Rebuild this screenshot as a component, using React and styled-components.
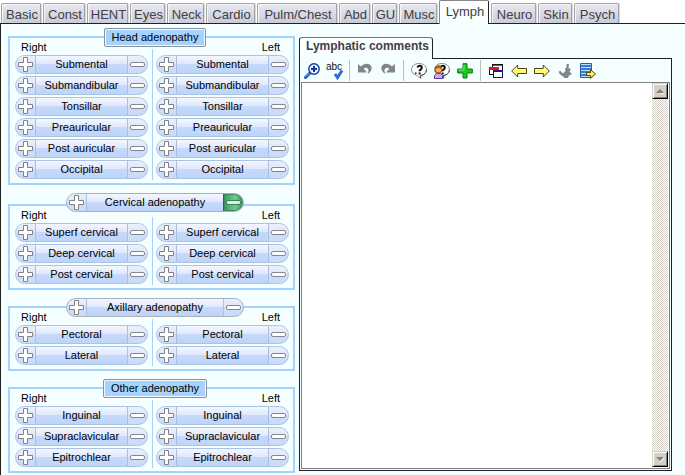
import React from "react";
import styled, { createGlobalStyle, css } from "styled-components";

const GlobalStyle = createGlobalStyle`
  * { box-sizing: border-box; }
  body { margin: 0; background: #f5ffff; }
  button, textarea { font-family: inherit; }
`;

const Page = styled.div`
  display: flex;
  flex-direction: column;
  min-height: 100vh;
  background: #f5ffff;
  color: #000;
  font: 11px/13px "Liberation Sans", Arial, sans-serif;
`;

const TabBar = styled.nav`
  display: flex;
  align-items: flex-end;
  gap: 2px;
  height: 24px;
  padding-left: 1px;
  background: #fff;
  box-shadow: inset 0 -1px #222;
`;

const Tab = styled.button`
  flex: 0 0 ${(p) => p.$width}px;
  height: 20px;
  margin: 0 0 1px;
  padding: 3px 0 0 2px;
  border: 1px solid #a2a2a6;
  border-bottom: 0;
  border-radius: 2px 2px 0 0;
  background: linear-gradient(#e8e9f0, #c9cbda);
  box-shadow: inset 1px 1px #f6f6fa, 1px 0 #d8d8dc;
  color: #404040;
  font-size: 13px;
  line-height: 15px;
  white-space: nowrap;
  display: flex;
  justify-content: center;
  ${(p) =>
    p.$active &&
    css`
      height: 24px;
      margin: 0;
      border-color: #888;
      border-right-color: #222;
      background: linear-gradient(#fff, #f5ffff);
      box-shadow: none;
    `}
`;

const Content = styled.main`
  flex: 1;
  display: flex;
  align-items: flex-start;
  gap: 4px;
  padding: 12px 13px 2px 7px;
  border-left: 1px solid #222;
`;

const Findings = styled.div`
  flex: 0 0 287px;
  display: flex;
  flex-direction: column;
  gap: 16px;
`;

const Panel = styled.section`
  position: relative;
  border: 2px solid #a5d3ff;
  padding: 17px 4px 2px 5px;
  margin-bottom: ${(p) => (p.$spaced ? 3 : 0)}px;
`;

const PanelHead = styled.div`
  position: absolute;
  top: -${(p) => p.$rise}px;
  left: 56px;
  width: 178px;
  display: grid;
  justify-items: ${(p) => (p.$wide ? "stretch" : "center")};
`;

const PanelTitle = styled.h2`
  margin: 0;
  padding: 2px 7px;
  border: 1px solid #8e9296;
  border-radius: 2px;
  box-shadow: inset 0 0 0 1px #f2f8ff;
  background: #a5d3ff;
  font-size: 11px;
  font-weight: 400;
  line-height: 13px;
  white-space: nowrap;
`;

const Side = styled.span`
  position: absolute;
  top: 3px;
  ${(p) => (p.$right ? "right: 13px;" : "left: 11px;")}
`;

const Columns = styled.div`
  display: grid;
  grid-template-columns: 1fr 8px 1fr;
`;

const Column = styled.div`
  display: grid;
  row-gap: 2px;
  padding-bottom: 2px;
`;

const Divider = styled.span`
  width: 1px;
  background: #a5d3ff;
  margin: -6px 0 1px 4px;
`;

const Pill = styled.div`
  display: flex;
  height: 19px;
  border: 1px solid ${(p) => (p.$heading ? "#a9b0ba" : "#abc4e4")};
  border-radius: 10px;
  overflow: hidden;
  background: linear-gradient(#f4f7ff 0%, #e0e8fc 45%, #c7d9fa 50%, #bdd4fa 100%);
`;

const PillLabel = styled.span`
  flex: 1;
  text-align: center;
  line-height: 17px;
  white-space: nowrap;
`;

const SignButton = styled.button`
  flex: 0 0 20px;
  display: flex;
  align-items: center;
  justify-content: center;
  padding: 0;
  border: 0 solid #a9bfe0;
  border-${(p) => (p.$end ? "left" : "right")}-width: 1px;
  background: ${(p) =>
    p.$on ? "linear-gradient(90deg, #379c62, #72c990 60%, #388f5c)" : "rgba(220, 230, 248, 0.4)"};
  ${(p) => p.$on && "border-color: #246c42; border-radius: 0 9px 9px 0; box-shadow: inset 0 0 0 1px #42855b;"}
`;

const Comments = styled.section`
  flex: 1;
  align-self: stretch;
  display: flex;
  flex-direction: column;
  min-width: 0;
  padding-top: 1px;
  margin-bottom: 2px;
`;

const CommentsTab = styled.label`
  align-self: flex-start;
  position: relative;
  z-index: 1;
  height: 22px;
  margin-bottom: -1px;
  padding: 2px 3px 0 6px;
  border: 1px solid #777;
  border-right-color: #222;
  border-left-color: #222;
  border-bottom: 0;
  border-radius: 3px 3px 0 0;
  background: linear-gradient(#fff, #f5ffff);
  color: #404048;
  font-size: 12px;
  font-weight: 700;
  line-height: 13px;
`;

const CommentsBody = styled.div`
  flex: 1;
  display: flex;
  flex-direction: column;
  border: 1px solid #222;
`;

const Toolbar = styled.div`
  display: flex;
  height: 23px;
  padding: 1px 0;
`;

const ToolGroup = styled.div`
  display: flex;
  align-items: center;
  gap: 7px;
  padding: 0 7px;
  & + & { border-left: 1px solid #bfbfbf; }
  &:first-child { padding: 0 6px 0 4px; }
`;

const ToolButton = styled.button`
  display: flex;
  width: 16px;
  height: 16px;
  padding: 0;
  border: 0;
  background: none;
`;

const Editor = styled.div`
  flex: 1;
  display: flex;
  margin: 0 1px 1px;
  padding: 0 1px 1px 0;
  border: 1px solid #808080;
  background: #fff;
`;

const EditorText = styled.textarea`
  flex: 1;
  min-width: 0;
  resize: none;
  border: 0;
  outline: 0;
  padding: 4px;
  background: #fff;
  font-size: 12px;
`;

const ScrollTrack = styled.div`
  flex: 0 0 16px;
  display: flex;
  flex-direction: column;
  justify-content: space-between;
  background: repeating-conic-gradient(#d4d0c8 0% 25%, #fff 0% 50%) 0 0 / 2px 2px;
`;

const ScrollButton = styled.button`
  display: flex;
  width: 16px;
  height: 16px;
  padding: 3px 2px;
  border: 1px solid #d4d0c8;
  border-right-color: #000;
  border-bottom-color: #000;
  background: #d4d0c8;
  box-shadow: inset 1px 1px #fff, inset -1px -1px #808080;
`;

const Svg = ({ children, ...rest }) => (
  <svg width="16" height="16" viewBox="0 0 16 16" fill="none" overflow="visible" aria-hidden="true" {...rest}>
    {children}
  </svg>
);

const PlusSign = () => (
  <Svg width="15" height="15" viewBox="0 0 15 15">
    <path d="M5.500.5h4v5h5v4h-5v5h-4v-5h-5v-4h5z" fill="#fff" stroke="#808288" strokeLinejoin="round" />
  </Svg>
);

const MinusSign = ({ on }) => (
  <Svg width="15" height="15" viewBox="0 0 15 15">
    <rect x=".5" y="5.5" width="14" height="4" rx="1.5" fill={on ? "#d7f4dd" : "#fff"} stroke={on ? "#348656" : "#85878c"} />
  </Svg>
);

const Bubble = () => (
  <>
    <path d="M8 .5C3.7.5.6 3 .6 6.600c0 3 2.100 5.200 5.200 5.800l3.600 2.900v-2.800c3.600-.4 6-2.700 6-5.900C15.400 3 12.300.5 8 .5z" fill="#fff" stroke="#888" />
    <path d="M15.300 6.500c.2 3-2 5.400-5.600 5.900v2.900" stroke="#444" />
    <path d="M6.500 4.500c.2-1.200 1-1.700 2.100-1.700 1.300 0 2.200.7 2.200 1.900 0 1.700-2.200 1.700-2.200 3.600" stroke="#111" strokeWidth="2" />
    <path d="M7.600 9.500h2v2h-2zM4 9.500h1.500V11H4z" fill="#111" />
  </>
);

const UndoShape = () => (
  <path d="M1 1l3 2.500C7 .3 11 0 13.300 2c2.500 2.600 1.500 6.500-2.800 9 1.200-2.500 1.500-4.500 0-5.800-1.200-.9-2.700-.6-3.800.6L10 9.500H1z" fill="#858585" />
);

const icons = {
  zoom: (
    <Svg>
      <path d="M1.500 14.500L6 10" stroke="#1c50c8" strokeWidth="3" strokeLinecap="round" />
      <path d="M1.500 14l4-4" stroke="#77b4ff" />
      <circle cx="10" cy="6" r="5.200" fill="#e4f4ff" stroke="#1438a0" strokeWidth="1.400" />
      <path d="M10 3v6M7 6h6" stroke="#1438a0" strokeWidth="2" />
    </Svg>
  ),
  spell: (
    <Svg>
      <text x="-1" y="7" fontSize="10" fill="#111" fontFamily="Liberation Sans, Arial, sans-serif">abc</text>
      <path d="M8 11l2.500 3.500L15 7.500" stroke="#2a6ddd" strokeWidth="3" />
    </Svg>
  ),
  undo: <Svg><UndoShape /></Svg>,
  redo: <Svg><g transform="matrix(-1 0 0 1 16 0)"><UndoShape /></g></Svg>,
  help: <Svg><Bubble /></Svg>,
  person: (
    <Svg>
      <Bubble />
      <path d="M.5 15.500v-3L2.500 10.500h4l2 2v3z" fill="#c9a8f8" stroke="#5c3b9a" />
      <circle cx="4.500" cy="6.500" r="3.500" fill="#f8b848" stroke="#8f4a10" />
      <path d="M1 6c0-5 7-5 7 0-1.500 0-2.500-.5-3.500-1.200C3.500 5.700 2.300 6 1 6z" fill="#a85a18" />
    </Svg>
  ),
  plus: (
    <Svg>
      <path d="M6 .7h4V6h5.300v4H10v5H6v-5H.7V6H6z" fill="#12cf12" stroke="#16701f" strokeLinejoin="round" />
      <path d="M7 2v5H2" stroke="#7cf07c" />
    </Svg>
  ),
  windows: (
    <Svg shapeRendering="crispEdges">
      <path d="M4.500 1.500h10v8h-10z" fill="#fff" stroke="#111" />
      <path d="M5 2h9v1H5z" fill="#12888c" />
      <path d="M1.500 4.500h9v7h-9z" fill="#fff" stroke="#111" />
      <path d="M1 4h10v3H1z" fill="#e31616" />
      <path d="M5.500 7.500h9v7h-9z" fill="#fff" stroke="#151560" />
      <path d="M5 7h10v2H5z" fill="#151597" />
    </Svg>
  ),
  back: (
    <Svg>
      <path d="M.7 8l6-6v3.500h8.800v5H6.700V14z" fill="#fff777" stroke="#51410a" />
      <path d="M2.500 7.500l3.200-3v2h9" stroke="#fffde0" />
    </Svg>
  ),
  forward: (
    <Svg>
      <path d="M15.300 8l-6-6v3.500H.5v5h8.800V14z" fill="#fff777" stroke="#51410a" />
      <path d="M1.500 6.500h8.800v-2" stroke="#fffde0" />
    </Svg>
  ),
  check: (
    <Svg>
      <path d="M9.500 1h2.500l-.5 4 2.500 1-1.500 2.500L15 11l-3 1.500-1 2.500H7.500L5 12.500 3 11.500 1.500 8.500l2-.5 2.500 2.500L8.500 8 8 5.500l1.500-1z" fill="#858585" />
    </Svg>
  ),
  list: (
    <Svg>
      <path d="M.5.5h11v14H.5z" fill="#bcdcff" stroke="#285caa" />
      <path d="M1 3h10M1 6h10M1 9h10M1 12h10" stroke="#397ed4" strokeWidth="2" />
      <path d="M6.500 9.500h4V6.700l5 4.300-5 4.300v-2.800h-4z" fill="#ffed57" stroke="#5c4a08" />
    </Svg>
  ),
};

const toolGroups = [
  [["zoom", "Zoom"], ["spell", "Check spelling"]],
  [["undo", "Undo"], ["redo", "Redo"]],
  [["help", "Help"], ["person", "Ask"], ["plus", "Add"]],
  [["windows", "Windows"], ["back", "Previous"], ["forward", "Next"], ["check", "Accept"], ["list", "Insert list"]],
];

const tabs = [
  ["Basic", 40], ["Const", 42], ["HENT", 41], ["Eyes", 35], ["Neck", 37], ["Cardio", 49],
  ["Pulm/Chest", 80], ["Abd", 31], ["GU", 25], ["Musc", 38], ["Lymph", 50], ["Neuro", 45],
  ["Skin", 34], ["Psych", 45],
];

const panels = [
  { title: "Head adenopathy", rows: ["Submental", "Submandibular", "Tonsillar", "Preauricular", "Post auricular", "Occipital"], spaced: true, rise: 10 },
  { title: "Cervical adenopathy", rows: ["Superf cervical", "Deep cervical", "Post cervical"], pill: true, absent: true, rise: 13 },
  { title: "Axillary adenopathy", rows: ["Pectoral", "Lateral"], pill: true, rise: 10 },
  { title: "Other adenopathy", rows: ["Inguinal", "Supraclavicular", "Epitrochlear"], rise: 10 },
];

function FindingPill({ label, side = "", heading, absent }) {
  const name = `${side} ${label}`.trim();
  return (
    <Pill $heading={heading}>
      <SignButton type="button" aria-label={`${name} present`}><PlusSign /></SignButton>
      <PillLabel>{label}</PillLabel>
      <SignButton type="button" $end $on={absent} aria-pressed={!!absent} aria-label={`${name} absent`}>
        <MinusSign on={absent} />
      </SignButton>
    </Pill>
  );
}

function FindingPanel({ title, rows, spaced, pill, absent, rise }) {
  return (
    <Panel $spaced={spaced}>
      <PanelHead $rise={rise} $wide={pill}>
        {pill ? <FindingPill label={title} heading absent={absent} /> : <PanelTitle>{title}</PanelTitle>}
      </PanelHead>
      <Side>Right</Side>
      <Side $right>Left</Side>
      <Columns>
        <Column>{rows.map((r) => <FindingPill key={r} label={r} side="Right" />)}</Column>
        <Divider />
        <Column>{rows.map((r) => <FindingPill key={r} label={r} side="Left" />)}</Column>
      </Columns>
    </Panel>
  );
}

export default function App() {
  return (
    <Page>
      <GlobalStyle />
      <TabBar>
        {tabs.map(([name, width]) => (
          <Tab key={name} type="button" $width={width} $active={name === "Lymph"}>{name}</Tab>
        ))}
      </TabBar>
      <Content>
        <Findings>{panels.map((p) => <FindingPanel key={p.title} {...p} />)}</Findings>
        <Comments>
          <CommentsTab htmlFor="comments">Lymphatic comments</CommentsTab>
          <CommentsBody>
            <Toolbar>
              {toolGroups.map((group) => (
                <ToolGroup key={group[0][0]}>
                  {group.map(([id, label]) => (
                    <ToolButton key={id} type="button" aria-label={label}>{icons[id]}</ToolButton>
                  ))}
                </ToolGroup>
              ))}
            </Toolbar>
            <Editor>
              <EditorText id="comments" />
              <ScrollTrack>
                <ScrollButton type="button" aria-label="Scroll up">
                  <svg width="10" height="8" viewBox="0 0 10 8" aria-hidden="true"><path d="M2 7h7V6z" fill="#fff" /><path d="M1 6h8L5 2z" fill="#808080" /></svg>
                </ScrollButton>
                <ScrollButton type="button" aria-label="Scroll down">
                  <svg width="10" height="8" viewBox="0 0 10 8" aria-hidden="true"><path d="M5 7l4-4V2z" fill="#fff" stroke="#fff" /><path d="M1 2h8L5 6z" fill="#808080" /></svg>
                </ScrollButton>
              </ScrollTrack>
            </Editor>
          </CommentsBody>
        </Comments>
      </Content>
    </Page>
  );
}
